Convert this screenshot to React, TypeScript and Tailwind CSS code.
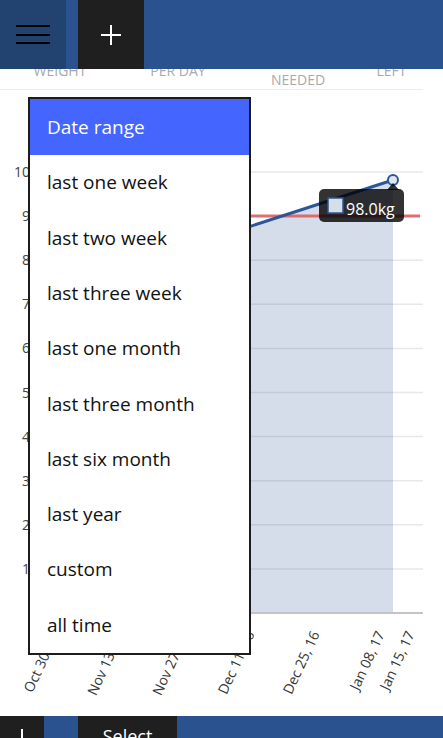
const menuItems = [
  'last one week',
  'last two week',
  'last three week',
  'last one month',
  'last three month',
  'last six month',
  'last year',
  'custom',
  'all time',
]

const yTicks = [10, 9, 8, 7, 6, 5, 4, 3, 2, 1]

const xLabels = [
  { t: 'Oct 30, 16', x: 60 },
  { t: 'Nov 13, 16', x: 125 },
  { t: 'Nov 27, 16', x: 190 },
  { t: 'Dec 11, 16', x: 255 },
  { t: 'Dec 25, 16', x: 320 },
  { t: 'Jan 08, 17', x: 385 },
  { t: 'Jan 15, 17', x: 415 },
]

function WeightChart() {
  const top = 172
  const step = 44.1
  return (
    <svg width="443" height="626" viewBox="0 90 443 626" className="shrink-0 block">
      {yTicks.map((v, i) => (
        <line key={v} x1="30" x2="423" y1={top + step * i} y2={top + step * i} stroke="#e8e8e8" strokeWidth="1.5" />
      ))}
      <polygon points="30,298 393,180 393,613 30,613" fill="#2b5797" fillOpacity="0.2" />
      <line x1="30" x2="420" y1="216" y2="216" stroke="#dc6060" strokeWidth="3" strokeOpacity="0.9" />
      <line x1="30" x2="423" y1="613" y2="613" stroke="#c4c4c4" strokeWidth="2" />
      <line x1="30" y1="298" x2="393" y2="180" stroke="#2b5797" strokeWidth="3" />
      <circle cx="393" cy="180" r="5" fill="#dfe5ef" stroke="#2b5797" strokeWidth="2" />

      {yTicks.map((v, i) => (
        <text key={v} x="30" y={top + step * i + 5} textAnchor="end" fontSize="14" fill="#444">
          {v}
        </text>
      ))}

      {xLabels.map(l => (
        <text
          key={l.t}
          x={l.x}
          y={634}
          textAnchor="end"
          fontSize="14"
          fill="#333"
          transform={`rotate(-65 ${l.x} 634)`}
        >
          {l.t}
        </text>
      ))}

      {/* tooltip */}
      <g>
        <polygon points="387,190 393,183 399,190" fill="#000" fillOpacity="0.8" />
        <rect x="319" y="189" width="85" height="33" rx="5" fill="#000" fillOpacity="0.8" />
        <rect x="328" y="198" width="15" height="15" fill="#d6deea" stroke="#2b5797" strokeWidth="1.5" />
        <text x="346" y="215" fontSize="16" fill="#fff">98.0kg</text>
      </g>
    </svg>
  )
}

export default function App() {
  return (
    <div className="relative w-[443px] h-[738px] overflow-hidden bg-white flex flex-col font-['Open_Sans',sans-serif]">

      {/* Top bar */}
      <div className="h-[69px] shrink-0 bg-[#29528f] flex">
        <button className="w-[66px] h-full bg-[#22436f] flex flex-col items-center justify-center gap-[6.5px]">
          <span className="block w-[34px] h-[2px] bg-black" />
          <span className="block w-[34px] h-[2px] bg-black" />
          <span className="block w-[34px] h-[2px] bg-black" />
        </button>
        <button className="ml-[12px] w-[66px] h-full bg-[#1f1f1f] flex items-center justify-center">
          <svg width="20" height="20" viewBox="0 0 20 20">
            <path d="M10 0V20M0 10H20" stroke="#fff" strokeWidth="2" />
          </svg>
        </button>
      </div>

      {/* Stats labels (scrolled under header) */}
      <div className="h-[21px] w-[423px] shrink-0 overflow-hidden flex items-start border-b border-[#ececec] text-[14px] leading-[14px] text-[#a9a9a9]">
        <div className="w-[120px] text-center mt-[-5px]">WEIGHT</div>
        <div className="w-[116px] text-center mt-[-5px]">PER DAY</div>
        <div className="w-[124px] text-center mt-[4px]">NEEDED</div>
        <div className="w-[63px] text-center mt-[-5px]">LEFT</div>
      </div>

      <WeightChart />

      {/* Bottom bar */}
      <div className="h-[22px] shrink-0 bg-[#29528f] flex overflow-hidden">
        <div className="w-[44px] h-[40px] bg-[#1f1f1f] flex justify-center pt-[13px]">
          <svg width="20" height="20" viewBox="0 0 20 20">
            <path d="M10 0V20M0 10H20" stroke="#fff" strokeWidth="2" />
          </svg>
        </div>
        <div className="ml-[34px] w-[99px] h-[40px] bg-[#1f1f1f] text-white text-[18px] leading-[18px] text-center pt-[11px]">
          Select
        </div>
      </div>

      {/* Date range menu */}
      <div className="absolute left-[28px] top-[97px] w-[223px] h-[558px] border-2 border-[#1c1c1c] bg-white flex flex-col">
        <div className="h-[56px] shrink-0 bg-[#4466ff] text-white text-[19px] pl-[17px] flex items-center">
          Date range
        </div>
        {menuItems.map(item => (
          <div key={item} className="h-[55.3px] shrink-0 text-[19px] text-[#111] pl-[17px] flex items-center">
            {item}
          </div>
        ))}
      </div>
    </div>
  )
}
